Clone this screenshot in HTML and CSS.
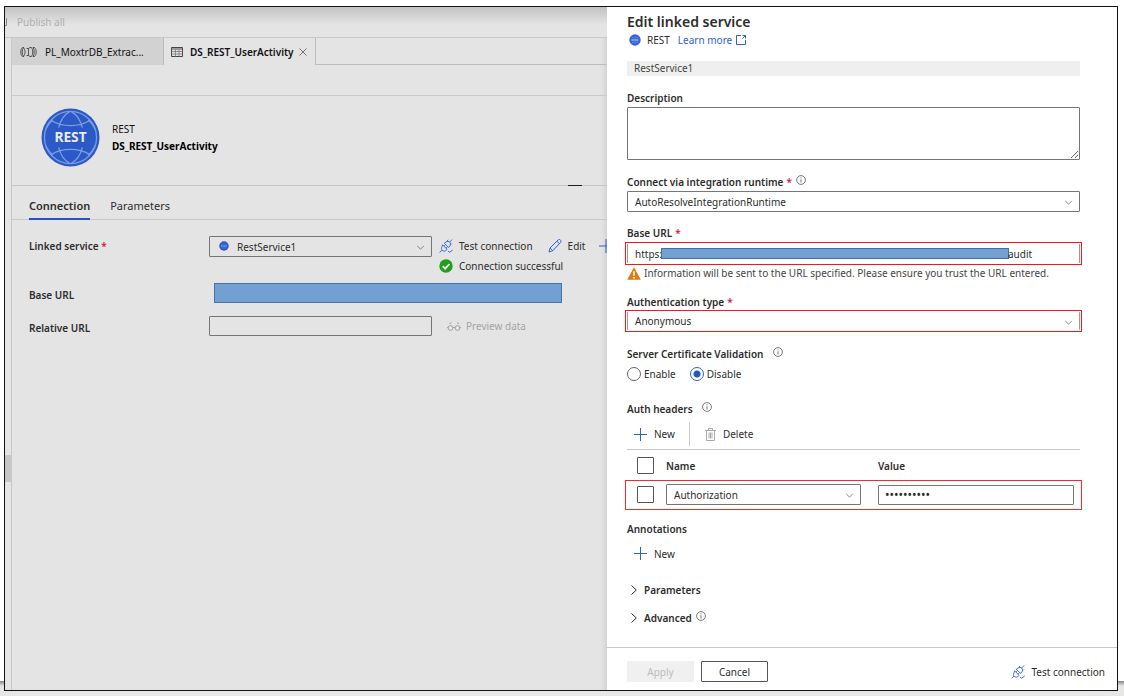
FILE: index.html
```html
<!DOCTYPE html>
<html lang="en">
<head>
<meta charset="utf-8">
<title>Edit linked service</title>
<link rel="stylesheet" href="styles.css">
</head>
<body>
<svg class="defs" aria-hidden="true">
  <symbol id="chevron" viewBox="0 0 10 6"><path d="M1 1l4 4 4-4" fill="none" stroke="currentColor"/></symbol>
  <symbol id="chevron-right" viewBox="0 0 6 10"><path d="M.5.500L5.300 5 .5 9.500" fill="none" stroke="currentColor"/></symbol>
  <symbol id="plus" viewBox="0 0 13 13"><path d="M6.500 0v13M0 6.500h13" fill="none" stroke="currentColor"/></symbol>
  <symbol id="info" viewBox="0 0 10 10"><circle cx="5" cy="5" r="4.400" fill="none" stroke="currentColor" stroke-width=".8"/><path d="M5 4.200v3.300M5 2.300v1" stroke="currentColor" stroke-width=".8"/></symbol>
  <symbol id="plug" viewBox="0 0 14 14"><g fill="none" stroke="currentColor" stroke-width=".9"><path d="M5.300 4.200l4.300 4.300 1.200-1.500c1-1.300.9-2.800 0-3.800s-2.500-1-3.700-.2zM10.700 3L13 .6M7.900 2.200L9.200.8M11.500 5.800l1.200-1.200"/><path d="M3.600 5.800l4.500 4.500-1.300 1.200c-1.100.9-2.600.8-3.500-.1s-1.100-2.500-.3-3.600zM3 11.200L.6 13.400M5 7.200l1.400-1.300M7 9.200l1.400-1.400"/><path d="M9 12l1.500 1.300L13.700 11"/></g></symbol>
  <symbol id="globe-small" viewBox="0 0 12 12"><circle cx="6" cy="6" r="5.700" fill="var(--globe)"/><path d="M2.500 3.200c2 .8 5 .8 7 0M2.500 8.800c2-.8 5-.8 7 0" stroke="var(--globe-line)" stroke-width=".4" fill="none"/><path d="M2.500 6h7" stroke="#a9c0f0" stroke-width="1.400" stroke-dasharray="1.400 .4"/></symbol>
</svg>

<div class="window">
  <main class="workspace">
    <header class="topbar">
      <svg class="save" viewBox="0 0 2 8"><path d="M0 7.500h1.500V0" fill="none" stroke="currentColor"/></svg>
      <button class="publish" disabled>Publish all</button>
    </header>
    <div class="columns">
      <div class="rail"><span class="rail-handle"></span></div>
      <div class="editor">
        <nav class="doc-tabs">
          <button class="doc-tab">
            <svg class="pipe" viewBox="0 0 17 12"><g fill="none" stroke="currentColor" stroke-width=".8"><path d="M3.500 1.500h-1C.2 3.500.2 8.500 2.500 10.500h1M3.500 1.500c2 2.500 2 6.500 0 9C1.800 8 1.800 4 3.500 1.500zM6.500 2.500h2v7h-2M8.500 2.500l1.500-1h1.500M8.500 9.500l1.500 1h1.500M11.500 1.500c1.700 2.500 1.700 6.500 0 9M13 1.500h1.500c2.300 2 2.300 7 0 9H13c1.700-2.500 1.700-6.500 0-9z"/></g></svg>
            <span>PL_MoxtrDB_Extrac...</span>
          </button>
          <button class="doc-tab active">
            <svg class="grid-icon" viewBox="0 0 12 10"><path d="M.5.500h11v9H.5z" fill="none" stroke="#444"/><path d="M.5 2h11" stroke="#555"/><path d="M.5 4.500h11M.5 7h11M4.500 2.500v7M8 2.500v7" fill="none" stroke="#777" stroke-width=".8"/></svg>
            <span>DS_REST_UserActivity</span>
            <svg class="close" viewBox="0 0 8 8"><path d="M.5.500l7 7M7.500.500l-7 7" stroke="#555" stroke-width=".8"/></svg>
          </button>
          <div class="doc-rest"></div>
        </nav>
        <div class="toolbar"></div>
        <section class="summary">
          <svg class="globe" viewBox="0 0 60 60"><circle cx="30" cy="30" r="29.500" fill="var(--globe)"/><g fill="none" stroke="var(--globe-line)" stroke-width="1.300"><circle cx="30" cy="30" r="26.500"/><path d="M11 13c10 6.500 28 6.500 38 0M11 47c10-6.500 28-6.500 38 0M18 20C20 12 23 7 29 4M42 20C40 12 37 7 31 4M18 40c2 8 5 13 11 16M42 40c-2 8-5 13-11 16M12 12C8 16 6 19 5 22M48 12c4 4 6 7 7 10M12 48c-4-4-6-7-7-10M48 48c4-4 6-7 7-10"/></g><text x="30" y="35" text-anchor="middle" class="globe-text">REST</text></svg>
          <div class="summary-text"><span>REST</span><strong>DS_REST_UserActivity</strong></div>
          <span class="grip"></span>
        </section>
        <nav class="tabs">
          <button class="tab current">Connection</button>
          <button class="tab">Parameters</button>
        </nav>
        <section class="form">
          <label class="form-label" for="linked">Linked service <b class="req">*</b></label>
          <div class="form-row">
            <div class="select with-icon">
              <select id="linked"><option>RestService1</option></select>
              <svg class="lead"><use href="#globe-small"/></svg>
              <svg class="chev"><use href="#chevron"/></svg>
            </div>
            <div class="actions">
              <div class="action-line">
                <button class="link-button"><svg class="i14"><use href="#plug"/></svg>Test connection</button>
                <button class="link-button edit"><svg class="i14" viewBox="0 0 14 14"><path d="M1 13l1-4L10.200.900c.8-.7 1.800-.4 2.300.2s.8 1.500.1 2.300L4.800 11.700zM9 2.200l2.700 2.700M2 9l2.800 2.700" fill="none" stroke="currentColor"/></svg>Edit</button>
                <button class="link-button new" aria-label="New"><svg class="i14"><use href="#plus"/></svg></button>
              </div>
              <div class="action-line"><svg class="i14" viewBox="0 0 14 14"><circle cx="7" cy="7" r="6.700" fill="#1da01a"/><path d="M3.700 7.200l2.400 2.400 4.400-4.600" fill="none" stroke="#fff" stroke-width="1.800"/></svg>Connection successful</div>
            </div>
          </div>
          <span class="form-label base-label">Base URL</span>
          <div class="masked"></div>
          <label class="form-label relative-label" for="relative">Relative URL</label>
          <div class="form-row">
            <input class="box relative-url" id="relative" type="text">
            <button class="preview" disabled><svg viewBox="0 0 14 9"><g fill="none" stroke="currentColor"><circle cx="3.500" cy="6" r="2.400"/><circle cx="10.500" cy="6" r="2.400"/><path d="M0 5.500h1.200M6 5.500h2M12.800 5.500H14M2.500 1.500L4.500.8M12 1.500L10 .8"/></g></svg>Preview data</button>
          </div>
        </section>
      </div>
    </div>
  </main>

  <aside class="panel">
    <div class="panel-body">
      <h1>Edit linked service</h1>
      <div class="subtitle"><svg class="i12"><use href="#globe-small"/></svg><span>REST</span><a href="#">Learn more<svg viewBox="0 0 10 10"><path d="M5 .5H.5v9h9V5M6.500.500h3v3M9.500.500L6.500 3.500" fill="none" stroke="currentColor"/></svg></a></div>
      <input class="name" type="text" value="RestService1" aria-label="Name" disabled>

      <label class="label" for="desc">Description</label>
      <textarea class="box" id="desc"></textarea>

      <label class="label runtime" for="runtime">Connect via integration runtime <b class="req">*</b><svg class="info"><use href="#info"/></svg></label>
      <div class="select"><select id="runtime"><option>AutoResolveIntegrationRuntime</option></select><svg class="chev"><use href="#chevron"/></svg></div>

      <label class="label" for="url">Base URL <b class="req">*</b></label>
      <div class="marked url-marked"><div class="url"><input id="url" type="text" value="https:"><span class="url-mask"></span><span>audit</span></div></div>
      <p class="warning"><svg viewBox="0 0 14 13"><path d="M7 .3L13.800 12.800H.2z" fill="#e07a10"/><path d="M7 4.200v4.600M7 9.900v1.500" stroke="#fff" stroke-width="1.500"/></svg>Information will be sent to the URL specified. Please ensure you trust the URL entered.</p>

      <label class="label" for="auth">Authentication type <b class="req">*</b></label>
      <div class="marked"><div class="select"><select id="auth"><option>Anonymous</option></select><svg class="chev"><use href="#chevron"/></svg></div></div>

      <div class="label cert">Server Certificate Validation<svg class="info far"><use href="#info"/></svg></div>
      <div class="radios">
        <label><input type="radio" name="cert">Enable</label>
        <label><input type="radio" name="cert" checked>Disable</label>
      </div>

      <div class="label headers">Auth headers<svg class="info far"><use href="#info"/></svg></div>
      <div class="table-tools">
        <button class="tool"><svg class="i13"><use href="#plus"/></svg>New</button>
        <span class="divider"></span>
        <button class="tool delete"><svg viewBox="0 0 11 13"><path d="M0 2.500h11M3.500 2V.500h4V2M1.500 2.500v10h8v-10M4 4.500v6M5.500 4.500v6M7 4.500v6" fill="none" stroke="currentColor"/></svg>Delete</button>
      </div>
      <table>
        <thead><tr><th class="check"><input type="checkbox" aria-label="Select all"></th><th class="col-name">Name</th><th>Value</th></tr></thead>
        <tbody><tr>
          <td class="check"><input type="checkbox" aria-label="Select Authorization"></td>
          <td class="col-name"><div class="select"><select aria-label="Header name"><option>Authorization</option></select><svg class="chev"><use href="#chevron"/></svg></div></td>
          <td class="col-value"><input class="box" type="password" value="authorized" aria-label="Header value"></td>
        </tr></tbody>
      </table>

      <div class="label notes">Annotations</div>
      <button class="tool"><svg class="i13"><use href="#plus"/></svg>New</button>
      <button class="expander first"><svg><use href="#chevron-right"/></svg>Parameters</button>
      <button class="expander"><svg><use href="#chevron-right"/></svg>Advanced<svg class="info"><use href="#info"/></svg></button>
    </div>
    <footer>
      <button class="button" disabled>Apply</button>
      <button class="button">Cancel</button>
      <button class="link-button"><svg class="i14"><use href="#plug"/></svg>Test connection</button>
    </footer>
  </aside>
</div>
</body>
</html>
```

FILE: styles.css
```css
:root {
  --globe: #3564d8;
  --globe-line: #9db7ef;
  --blue: #2f62cf;
  --text: #2d2d2d;
  --mask: #739fd1;
}
* { box-sizing: border-box; }
body {
  margin: 0;
  height: 100vh;
  padding: 6px 6px 5px 4px;
  display: flex;
  color: var(--text);
  font: 10px/16px "Noto Sans", "Open Sans", sans-serif;
  background: linear-gradient(to top, #e7e7e5 10px, #858585 15px, #fff 15px);
}
button, input, select, textarea { font: inherit; color: inherit; margin: 0; }
button { border: 0; padding: 0; background: none; text-align: left; white-space: nowrap; }
svg { display: block; flex: none; }
.defs { position: absolute; width: 0; height: 0; }
.globe-text { font: 700 14px "Noto Sans", sans-serif; fill: #e8ebf2; }
.i12 { width: 12px; height: 12px; }
.i13 { width: 13px; height: 13px; color: var(--blue); }
.i14 { width: 14px; height: 14px; color: var(--blue); }
.req { color: #d6183f; font-weight: 600; }

.window { flex: 1; min-width: 0; display: flex; border: 1px solid #10131c; background: #fff; overflow: hidden; }

/* Workspace */
.workspace { --globe: #2b59c8; --globe-line: #7d9de0; flex: 1; min-width: 0; display: flex; flex-direction: column; background: #e4e4e4; overflow: hidden; box-shadow: inset -5px 0 5px -3px #cfcfcf; }
.topbar { height: 31px; flex: none; display: flex; align-items: center; gap: 10px; border-bottom: 1px solid #c8c8c8; background: linear-gradient(#c2c2c2, #e4e4e4 18px); }
.topbar .save { width: 2px; height: 8px; color: #888; }
.publish { color: #afafaf; }
.columns { flex: 1; display: flex; min-height: 0; }
.rail { width: 7px; border-right: 1px solid #c8c8c8; display: flex; align-items: flex-end; padding-bottom: 208px; }
.rail-handle { width: 6px; height: 27px; background: #c6c6c6; }
.editor { flex: 1; min-width: 0; }
.doc-tabs { display: flex; height: 27px; color: #111; }
.doc-tab { width: 152px; padding: 0 8px; display: flex; align-items: center; background: #d2d2d2; border-right: 1px solid #bdbdbd; }
.doc-tab.active { background: none; font-weight: 600; padding-left: 7px; }
.doc-rest { flex: 1; border-bottom: 1px solid #bdbdbd; }
.pipe { width: 17px; height: 12px; margin-right: 8px; color: #333; }
.grid-icon { width: 12px; height: 10px; margin-right: 7px; }
.close { width: 8px; height: 8px; margin-left: auto; }
.toolbar { height: 31px; border-bottom: 1px solid #cacaca; }
.summary { position: relative; height: 90px; padding: 0 29px 6px; display: flex; align-items: center; gap: 12px; border-bottom: 1px solid #c6c6c6; }
.globe { width: 59px; height: 59px; }
.summary-text { display: flex; flex-direction: column; gap: 1px; color: #111; }
.summary-text strong { color: #000; }
.grip { position: absolute; right: 25px; bottom: -1px; width: 14px; height: 1px; background: #1e1e1e; }
.tabs { display: flex; gap: 20px; height: 34px; padding: 7px 17px 0; border-bottom: 1px solid #c8c8c8; font-size: 11px; }
.tab { height: 27px; border-bottom: 2px solid transparent; }
.tab.current { font-weight: 600; border-bottom-color: #2453c4; }
.form { padding: 16px 0 0 17px; display: grid; grid-template-columns: 180px 1fr; }
.form-label { font-weight: 600; padding-top: 2px; }
.base-label { padding-top: 11px; }
.relative-label { padding-top: 17px; }
.form-row { display: flex; align-items: flex-start; min-width: 0; }
.with-icon, .relative-url { width: 223px; flex: none; }
.with-icon .lead { position: absolute; left: 10px; top: 5px; width: 10px; height: 10px; }
.actions { margin-left: 7px; }
.action-line { display: flex; align-items: center; height: 20px; gap: 6px; white-space: nowrap; }
.link-button { display: flex; align-items: center; gap: 6px; }
.edit { margin-left: 9px; }
.new { margin-left: 8px; }
.masked { height: 20px; width: 348px; margin: 7px 0 0 5px; background: var(--mask); border: 1px solid #4374ae; }
.relative-url { margin-top: 13px; }
.preview { display: flex; align-items: center; gap: 5px; margin: 15px 0 0 15px; color: #a4a4a4; }
.preview svg { width: 14px; height: 9px; }

/* Fields */
.box, .select select { border: 1px solid #767676; border-radius: 1px; background: transparent; }
.box { padding: 0 6px; height: 20px; }
.select { position: relative; }
.select select { display: block; appearance: none; width: 100%; height: 21px; padding: 0 24px 0 7px; }
.select.with-icon select { padding-left: 27px; }
.select .chev { position: absolute; right: 7px; top: 9px; width: 9px; height: 5px; color: #707070; pointer-events: none; }

/* Panel */
.panel { flex: 0 0 510px; display: flex; flex-direction: column; background: #fff; }
.panel-body { flex: 1; min-height: 0; padding: 6px 37px 0 20px; }
h1 { margin: 0; font-size: 14px; line-height: 18px; font-weight: 600; }
.subtitle { display: flex; align-items: center; gap: 6px; height: 18px; padding-left: 2px; }
.subtitle a { display: flex; align-items: center; gap: 4px; margin-left: 2px; color: var(--blue); text-decoration: none; }
.subtitle a svg { width: 10px; height: 10px; }
.name { display: block; width: 100%; height: 15px; margin-top: 12px; padding: 0 7px 2px; border: 0; background: #efefef; color: #444; }
.label { display: flex; align-items: center; gap: 3px; height: 16px; font-weight: 600; }
.label[for="desc"] { margin: 14px 0 1px; }
textarea { display: block; width: 100%; resize: vertical; }
textarea.box { height: 53px; }
.label.runtime { margin: 14px 0 1px; }
.info { width: 10px; height: 10px; margin: 0 0 4px 1px; color: #555; }
.info.far { margin-left: 6px; }
.label[for="url"] { margin-top: 13px; }
.marked { outline: 1px solid #f51818; outline-offset: 1px; }
.url-marked { margin-top: 3px; }
.url { display: flex; align-items: center; height: 19px; padding: 0 6px 0 7px; border: 1px solid #999; border-width: 0 1px; }
.url input { width: 26px; border: 0; padding: 0; background: none; }
.url-mask { width: 348px; height: 11px; background: var(--mask); border: 1px solid #3b6fb0; }
.url span:last-child { margin-left: -1px; }
.warning { display: flex; align-items: center; gap: 3px; margin: 2px 0 0; white-space: nowrap; color: #444; }
.warning svg { width: 14px; height: 13px; }
.label[for="auth"] { margin: 13px 0 2px; }
.marked .select select { height: 18px; border-color: #999; border-width: 0 1px; }
.marked .chev { top: 8px; }
.label.cert { margin-top: 16px; }
.radios { display: flex; gap: 14px; margin-top: 4px; }
.radios label { display: flex; align-items: center; gap: 3px; }
.radios input { appearance: none; width: 14px; height: 14px; border: 1px solid #666; border-radius: 50%; }
.radios input:checked { border-color: var(--blue); background: radial-gradient(circle, #2456c4 0 3px, transparent 4px); }
.label.headers { margin-top: 19px; }
.table-tools { display: flex; align-items: center; height: 32px; padding-top: 2px; gap: 14px; }
.tool { display: flex; align-items: center; gap: 7px; padding-left: 7px; height: 16px; }
.divider { width: 1px; height: 24px; background: #ccc; }
.tool.delete { padding-left: 1px; }
.delete svg { width: 11px; height: 13px; color: #aaa; }
table { width: 100%; border-collapse: collapse; table-layout: fixed; border-top: 1px solid #c8c8c8; }
th, td { padding: 0; text-align: left; font-weight: inherit; }
th { height: 32px; font-weight: 600; }
td { height: 26px; }
.check { width: 39px; padding-left: 10px; }
.check input { display: block; appearance: none; width: 17px; height: 17px; border: 1px solid #555; border-radius: 1px; }
.col-name { width: 212px; padding-right: 17px; }
.col-value { padding-right: 6px; }
.col-value input { display: block; width: 100%; font-size: 12px; }
tbody tr { outline: 1px solid #f52a2a; outline-offset: 1px; }
.label.notes { margin: 13px 0 9px; }
.expander { display: flex; align-items: center; gap: 7px; height: 16px; margin-top: 12px; padding-left: 4px; font-weight: 600; }
.expander.first { margin-top: 20px; }
.expander svg:first-child { width: 6px; height: 10px; }
.expander .info { margin-left: -3px; }
footer { display: flex; align-items: center; gap: 7px; height: 43px; padding: 5px 12px 0 20px; border-top: 1px solid #c8c8c8; }
footer .link-button { margin-left: auto; }
.button { width: 67px; height: 21px; border: 1px solid #555; border-radius: 1px; text-align: center; }
.button:disabled { border-color: #f0f0f0; background: #f0f0f0; color: #bdbdbd; }
```
